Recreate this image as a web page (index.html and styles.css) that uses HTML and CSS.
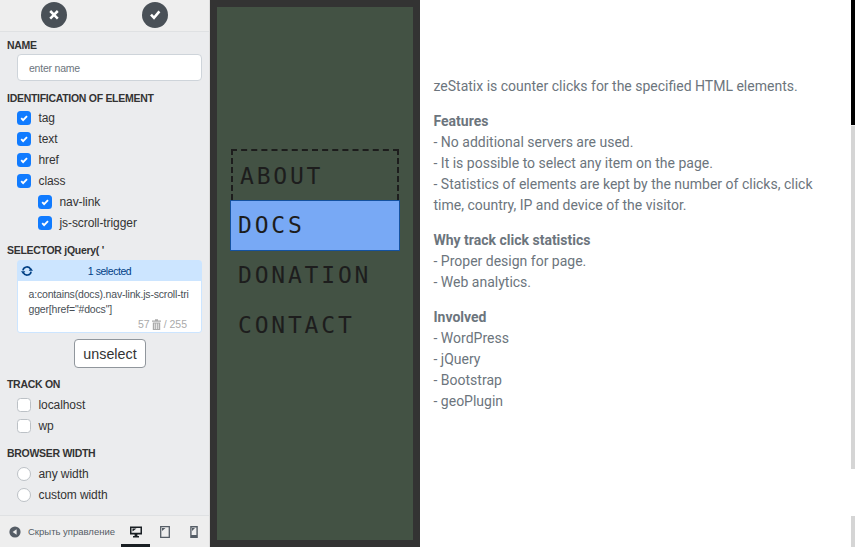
FILE: index.html
```html
<!DOCTYPE html>
<html lang="en">
<head>
<meta charset="utf-8">
<title>zeStatix</title>
<link rel="stylesheet" href="styles.css">
</head>
<body>
<svg class="defs" width="0" height="0">
  <symbol id="tick" viewBox="0 0 14 14"><path d="M4.2 7.2l1.9 1.9 3.9-4" fill="none" stroke="#fff" stroke-width="1.9"/></symbol>
</svg>
<div class="app">
  <aside class="sidebar">
    <header class="actions">
      <button class="round"><svg viewBox="0 0 26 26"><path d="M9.2 9l7.6 7.6M16.8 9l-7.6 7.6" stroke="#fff" stroke-width="2.5" fill="none"/></svg></button>
      <button class="round"><svg viewBox="0 0 26 26"><path d="M9 12.6l3 3.2 5.4-6.4" stroke="#fff" stroke-width="2.6" fill="none"/></svg></button>
    </header>
    <div class="panel">
      <h2>NAME</h2>
      <div class="field">enter name</div>
      <h2 class="ident">IDENTIFICATION OF ELEMENT</h2>
      <ul class="checks upper">
        <li><i class="box on"><svg><use href="#tick"/></svg></i><span>tag</span></li>
        <li><i class="box on"><svg><use href="#tick"/></svg></i><span>text</span></li>
        <li><i class="box on"><svg><use href="#tick"/></svg></i><span>href</span></li>
        <li><i class="box on"><svg><use href="#tick"/></svg></i><span>class</span></li>
        <li class="sub"><i class="box on"><svg><use href="#tick"/></svg></i><span>nav-link</span></li>
        <li class="sub"><i class="box on"><svg><use href="#tick"/></svg></i><span>js-scroll-trigger</span></li>
      </ul>
      <h2 class="sel-title">SELECTOR jQuery( '</h2>
      <div class="selector">
        <div class="sel-head">
          <svg class="sync" viewBox="0 0 12 12"><path d="M1.9 5.4a4.1 4.1 0 0 1 7.8-1.1M10.1 6.6a4.1 4.1 0 0 1-7.8 1.1" fill="none" stroke="#004085" stroke-width="1.6"/><path d="M7.7 5.8H12L9.9 3.1zM4.3 6.2H0l2.1 2.7z" fill="#004085" transform="rotate(180 6 6)"/></svg>
          <span>1 selected</span>
        </div>
        <div class="sel-body">a:contains(docs).nav-link.js-scroll-tri<br>gger[href="#docs"]</div>
        <div class="count"><span>57</span><svg viewBox="0 0 9 11"><path d="M0 1.5h3V.3h3v1.2h3v1.2H0zM.8 3.4h7.4V11H.8z" fill="#aaa"/><path d="M2.7 4.5V10M4.5 4.5V10M6.3 4.5V10" stroke="#fff" stroke-width=".7"/></svg><span>/ 255</span></div>
      </div>
      <button class="unselect">unselect</button>
      <h2 class="track">TRACK ON</h2>
      <ul class="checks">
        <li><i class="box"></i><span>localhost</span></li>
        <li><i class="box"></i><span>wp</span></li>
      </ul>
      <h2 class="width">BROWSER WIDTH</h2>
      <ul class="checks">
        <li><i class="box radio"></i><span>any width</span></li>
        <li><i class="box radio"></i><span>custom width</span></li>
      </ul>
    </div>
    <footer class="bar">
      <svg class="collapse" viewBox="0 0 12 12"><circle cx="6" cy="6" r="5.6" fill="#555d66"/><path d="M7.6 3.2v5.6L3.6 6z" fill="#eee"/></svg>
      <span class="hide">Скрыть управление</span>
      <span class="device active"><svg viewBox="0 0 12 12"><path d="M0 .5h12v8H7.4v1.6H9v1.4H3v-1.4h1.6V8.5H0zM1.5 2v4.8h9V2z" fill="#191e23" fill-rule="evenodd"/><path d="M2.5 2.5h4L2.5 5.4z" fill="#191e23"/></svg></span>
      <span class="device"><svg viewBox="0 0 12 12"><path d="M1.7.7h8.6v10.6H1.7z" fill="none" stroke="#555d66" stroke-width="1.3"/><path d="M3 2h3.5L3 5z" fill="#555d66"/></svg></span>
      <span class="device"><svg viewBox="0 0 12 12"><path d="M2.9.8h6.2v10.4H2.9z" fill="none" stroke="#555d66" stroke-width="1.4"/><path d="M4 2h3L4 5zM3 9h6v2H3z" fill="#555d66"/></svg></span>
    </footer>
  </aside>
  <nav class="frame">
    <div class="screen">
      <a class="about">ABOUT</a>
      <a class="docs">DOCS</a>
      <a>DONATION</a>
      <a>CONTACT</a>
    </div>
  </nav>
  <main class="content">
    <p>zeStatix is counter clicks for the specified HTML elements.</p>
    <p><b>Features</b><br>- No additional servers are used.<br>- It is possible to select any item on the page.<br>- Statistics of elements are kept by the number of clicks, click<br>time, country, IP and device of the visitor.</p>
    <p><b>Why track click statistics</b><br>- Proper design for page.<br>- Web analytics.</p>
    <p><b>Involved</b><br>- WordPress<br>- jQuery<br>- Bootstrap<br>- geoPlugin</p>
  </main>
  <div class="rail"><div class="thumb"></div><div class="track-a"></div><div class="gap"></div><div class="track-b"></div></div>
</div>
</body>
</html>
```
FILE: styles.css
```css
* { box-sizing: border-box; }
body { margin: 0; background: #fff; font-family: "Liberation Sans", sans-serif; }
.defs { display: block; }
.app { display: flex; width: 855px; height: 547px; overflow: hidden; }
.sidebar { width: 210px; display: flex; flex-direction: column; background: #ebecee; border-right: 1px solid #ddd; color: #333; }
.actions { height: 32px; padding: 2px 41px 0; display: flex; justify-content: space-between; background: #eee; border-bottom: 1px solid #dfe1e3; }
.round { width: 26px; height: 26px; padding: 0; border: 0; border-radius: 50%; background: #495057; }
.round svg { display: block; width: 26px; height: 26px; }
.panel { flex: 1; padding: 6px 7px 0; display: flex; flex-direction: column; }
h2 { margin: 0; height: 14px; line-height: 14px; font-size: 10.5px; font-weight: bold; letter-spacing: -0.29px; white-space: pre; }
.field { width: 185px; height: 27px; margin: 2px 0 0 10px; padding: 0 11px; line-height: 27px; font-size: 10.5px; letter-spacing: -0.22px; color: #6c757d; background: #fff; border: 1px solid #ced4da; border-radius: 4px; }
.ident { margin-top: 10px; }
.checks { list-style: none; margin: 3px 0 0; padding: 0 0 0 10px; }
.checks.upper { margin: 2px 0 1px; }
.checks li { height: 21px; display: flex; align-items: center; font-size: 12px; letter-spacing: -0.08px; }
.checks span { margin-left: 7.5px; }
.checks.upper span { padding-top: 1px; }
.checks .sub { padding-left: 21px; }
.box { width: 14px; height: 14px; border: 1px solid #bcc1c6; border-radius: 3.5px; background: #fff; }
.box.on { border: 0; background: #107bff; }
.box svg { display: block; width: 14px; height: 14px; }
.box.radio { border-radius: 50%; }
.sel-title { margin-top: 9px; }
.selector { width: 185px; height: 73px; margin: 3px 0 0 10px; background: #fff; border: 1px solid #cce5ff; border-radius: 3px; }
.sel-head { height: 20px; display: flex; align-items: center; background: #cce5ff; color: #004085; font-size: 10.5px; letter-spacing: -0.45px; }
.sel-head span { flex: 1; text-align: center; padding-right: 15px; }
.sync { width: 12px; height: 12px; margin-left: 3px; }
.sel-body { height: 36px; padding: 6px 0 0 10.5px; font-size: 10.5px; letter-spacing: -0.17px; line-height: 15px; white-space: nowrap; color: #495057; }
.count { display: flex; align-items: center; justify-content: flex-end; height: 14px; padding-right: 14px; font-size: 10.5px; color: #aaa; }
.count svg { width: 9px; height: 11px; margin: 0 3px 0 2px; }
.unselect { width: 72px; height: 29px; margin: 6px 0 0 67px; padding: 0; font: 14.3px "Liberation Sans", sans-serif; color: #333; background: #fff; border: 1px solid #90969c; border-radius: 4px; }
.track { margin-top: 9px; }
.width { margin-top: 10px; }
.bar { height: 32px; display: flex; align-items: center; width: 209px; background: #eee; border-top: 1px solid #dfe1e3; padding-left: 9px; color: #555d66; font-size: 9.5px; }
.collapse { width: 12px; height: 12px; }
.hide { width: 93px; margin-left: 7px; white-space: nowrap; overflow: hidden; }
.device { width: 29px; height: 31px; flex: none; display: flex; align-items: center; justify-content: center; }
.device svg { width: 12px; height: 12px; }
.device.active { border-bottom: 3px solid #191e23; padding-top: 3px; }
.frame { width: 210px; padding: 7px 7px; background: #333; }
.screen { width: 196px; height: 533px; padding: 142px 13px 0; background: #435244; }
.screen a { display: block; height: 50px; padding-left: 8px; font: 23px/49px "DejaVu Sans Mono", monospace; letter-spacing: 2.8px; color: #1d1d1d; }
.screen .about { height: 51px; margin: 0 1px; padding-left: 7px; line-height: 50px; border: 2px dashed #1d1d1d; border-bottom: 0; }
.screen .docs { height: 51px; background: #78a9f5; border: 1px solid #1452a0; padding-left: 7px; }
.content { flex: 1; padding: 76px 0 0 13.5px; font: 14px/21px Roboto, sans-serif; color: #6c757d; white-space: nowrap; }
.content p { margin: 0 0 14px; }
.rail { width: 4px; display: flex; flex-direction: column; }
.thumb { height: 125px; background: #000; }
.track-a { height: 344px; background: #d5d5d5; border-top: 1px solid #eee; }
.gap { height: 47px; }
.track-b { height: 31px; background: #d5d5d5; }
```
